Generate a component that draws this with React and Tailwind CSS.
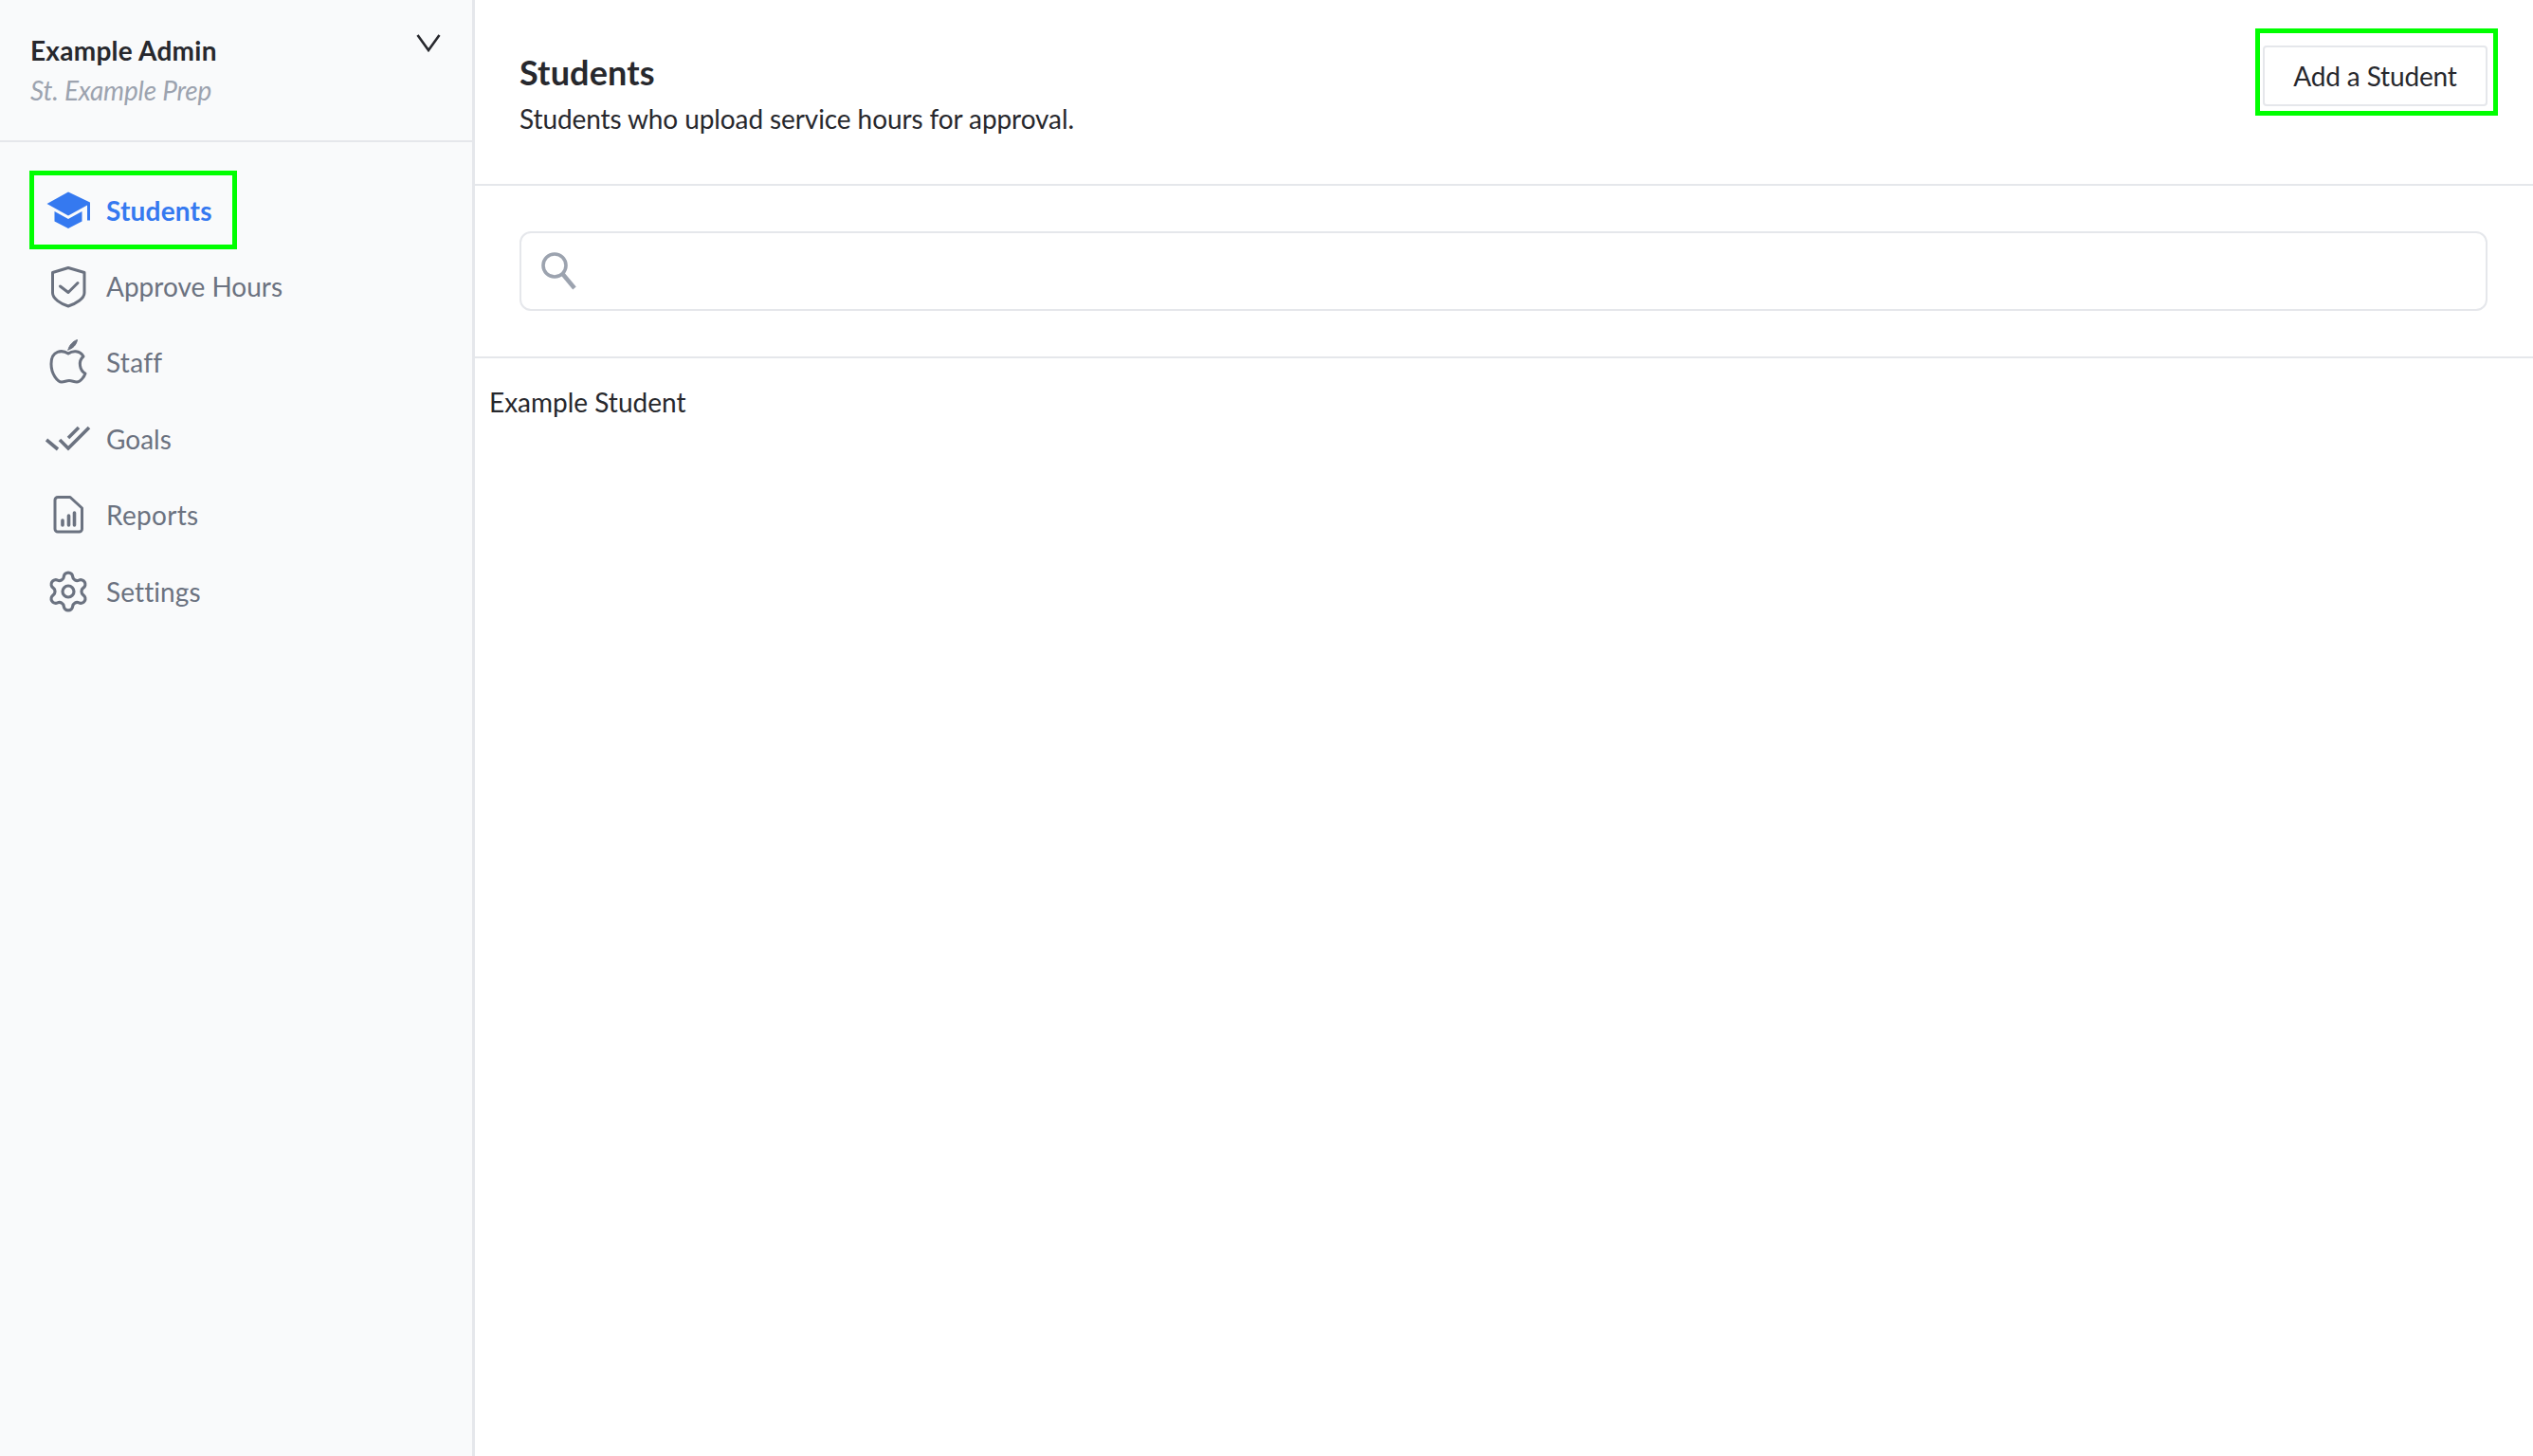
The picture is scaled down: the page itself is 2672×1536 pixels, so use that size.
import React from 'react';
import { Settings } from 'lucide-react';

const CapIcon = () => (
    <svg width="48" height="48" viewBox="0 0 48 48" fill="#3579f0">
        <path d="M24 4.5 L1.5 17 L24 29.5 L44 18.5 V34.5 H47 V15.5 Z" />
        <path d="M9.5 25 L24 33 L38.5 25 V35.5 L24 43 L9.5 35.5 Z" />
    </svg>
);

const ShieldIcon = () => (
    <svg width="48" height="48" viewBox="0 0 48 48" fill="none" stroke="#6b7280" strokeWidth="3" strokeLinejoin="round" strokeLinecap="round">
        <path d="M24 4.5 L41 9.5 V31 C41 37 32 42.5 24 45 C16 42.5 7.5 37 7.5 31 V9.5 Z" />
        <path d="M15.5 24 L24 30.5 L34 20.5" />
    </svg>
);

const AppleIcon = () => (
    <svg width="48" height="48" viewBox="0 0 48 48" fill="none" stroke="#6b7280" strokeWidth="3" strokeLinejoin="round" strokeLinecap="round">
        <path d="M24 15 C18 11 6 11 6 26 C6 37 13 45 17 45 C20 45 22 43.5 25 43.5 C28 43.5 30 45 33 45 C37 45 41 39 42 36 C36 33 34 23 40 18 C36 11 28 12 24 15 Z" />
        <path d="M24 11 C25 6 29 2 33.5 0.5 C32.5 6 29 9.5 24 11 Z" fill="#6b7280" strokeWidth="1" />
    </svg>
);

const GoalsIcon = () => (
    <svg width="48" height="48" viewBox="0 0 48 48" fill="none" stroke="#6b7280" strokeWidth="3.6">
        <path d="M1 25 L13 35" />
        <path d="M15 25 L24 34 L46 12" />
        <path d="M24 23 L35 12" />
    </svg>
);

const ReportIcon = () => (
    <svg width="48" height="48" viewBox="0 0 48 48" fill="none" stroke="#6b7280" strokeWidth="3" strokeLinejoin="round" strokeLinecap="round">
        <path d="M13 5.5 H26 L38.5 17 V39 A3 3 0 0 1 35.5 42 H13 A3 3 0 0 1 10 39 V8.5 A3 3 0 0 1 13 5.5 Z" />
        <path d="M18 35 V30 M24.5 35 V25 M30.5 35 V22" strokeWidth="3.6" />
    </svg>
);

const navItems = [
    { label: 'Approve Hours', icon: <ShieldIcon /> },
    { label: 'Staff', tracking: 'tracking-[0.3px]', icon: <AppleIcon /> },
    { label: 'Goals', icon: <GoalsIcon /> },
    { label: 'Reports', tracking: 'tracking-[0.3px]', icon: <ReportIcon /> },
    { label: 'Settings', tracking: 'tracking-[0.1px]', icon: <Settings size={48} strokeWidth={1.6} color="#6b7280" /> },
];

export default function App() {
    return (
        <div className="flex h-[1536px] w-[2672px] overflow-hidden bg-white text-[28px] text-[#27282d] font-['Lato',sans-serif]">
            <aside className="w-[501px] shrink-0 bg-[#f9fafb] border-r-[3px] border-[#e5e7eb]">
                <div className="flex justify-between h-[150px] pl-[32px] pr-[33px] pt-[32px] border-b-[2px] border-[#e5e7eb]">
                    <div>
                        <div className="text-[28px] leading-[42px] font-bold tracking-[0.25px]">Example Admin</div>
                        <div className="text-[28px] leading-[42px] italic text-[#9ca3af] tracking-[-0.2px]">St. Example Prep</div>
                    </div>
                    <svg width="26" height="20" viewBox="0 0 26 20" fill="none" stroke="#27282d" strokeWidth="2.6" className="mt-[3px]">
                        <path d="M1.5 2 L13 18 L24.5 2" />
                    </svg>
                </div>

                <nav className="pt-[30px] pl-[31px]">
                    <div className="flex items-center gap-[16px] w-[219px] h-[83px] mb-[-1.5px] pl-[12px] border-[5px] border-[#00ff00] text-[#3579f0] font-bold tracking-[0.2px]">
                        <CapIcon />
                        <span>Students</span>
                    </div>
                    {navItems.map(item => (
                        <div key={item.label} className="flex items-center gap-[16px] h-[80.5px] pl-[17px] text-[#6b7280]">
                            {item.icon}
                            <span className={item.tracking}>{item.label}</span>
                        </div>
                    ))}
                </nav>
            </aside>

            <main className="flex-1 min-w-0">
                <div className="flex justify-between h-[196px] pl-[47px] pr-[37px] pt-[30px] border-b-[2px] border-[#e5e7eb]">
                    <div className="pt-[23px]">
                        <h1 className="text-[36px] leading-[46px] font-bold tracking-[0.15px]">Students</h1>
                        <p className="leading-[53px] tracking-[-0.1px]">Students who upload service hours for approval.</p>
                    </div>
                    <div className="flex items-start w-[256px] h-[92px] pt-[13px] pl-[3px] border-[5px] border-[#00ff00]">
                        <button className="w-[237px] h-[64px] bg-white border-[2px] border-[#e5e7eb] rounded-[4px] text-[#27282d] text-[28px] tracking-[-0.15px]">
                            Add a Student
                        </button>
                    </div>
                </div>

                <div className="h-[182px] px-[47px] pt-[48px] border-b-[2px] border-[#e5e7eb]">
                    <div className="flex items-center h-[84px] w-[2076px] pl-[20px] border-[2px] border-[#e5e7eb] rounded-[12px]">
                        <svg width="40" height="44" viewBox="0 0 40 44" fill="none" stroke="#9ca3af" strokeWidth="3.6">
                            <circle cx="15" cy="16" r="12" />
                            <path d="M23.5 25 L36 40" strokeWidth="4.5" />
                        </svg>
                    </div>
                </div>

                <div className="pl-[15px] pt-[25px] leading-[42px]">Example Student</div>
            </main>
        </div>
    );
}
